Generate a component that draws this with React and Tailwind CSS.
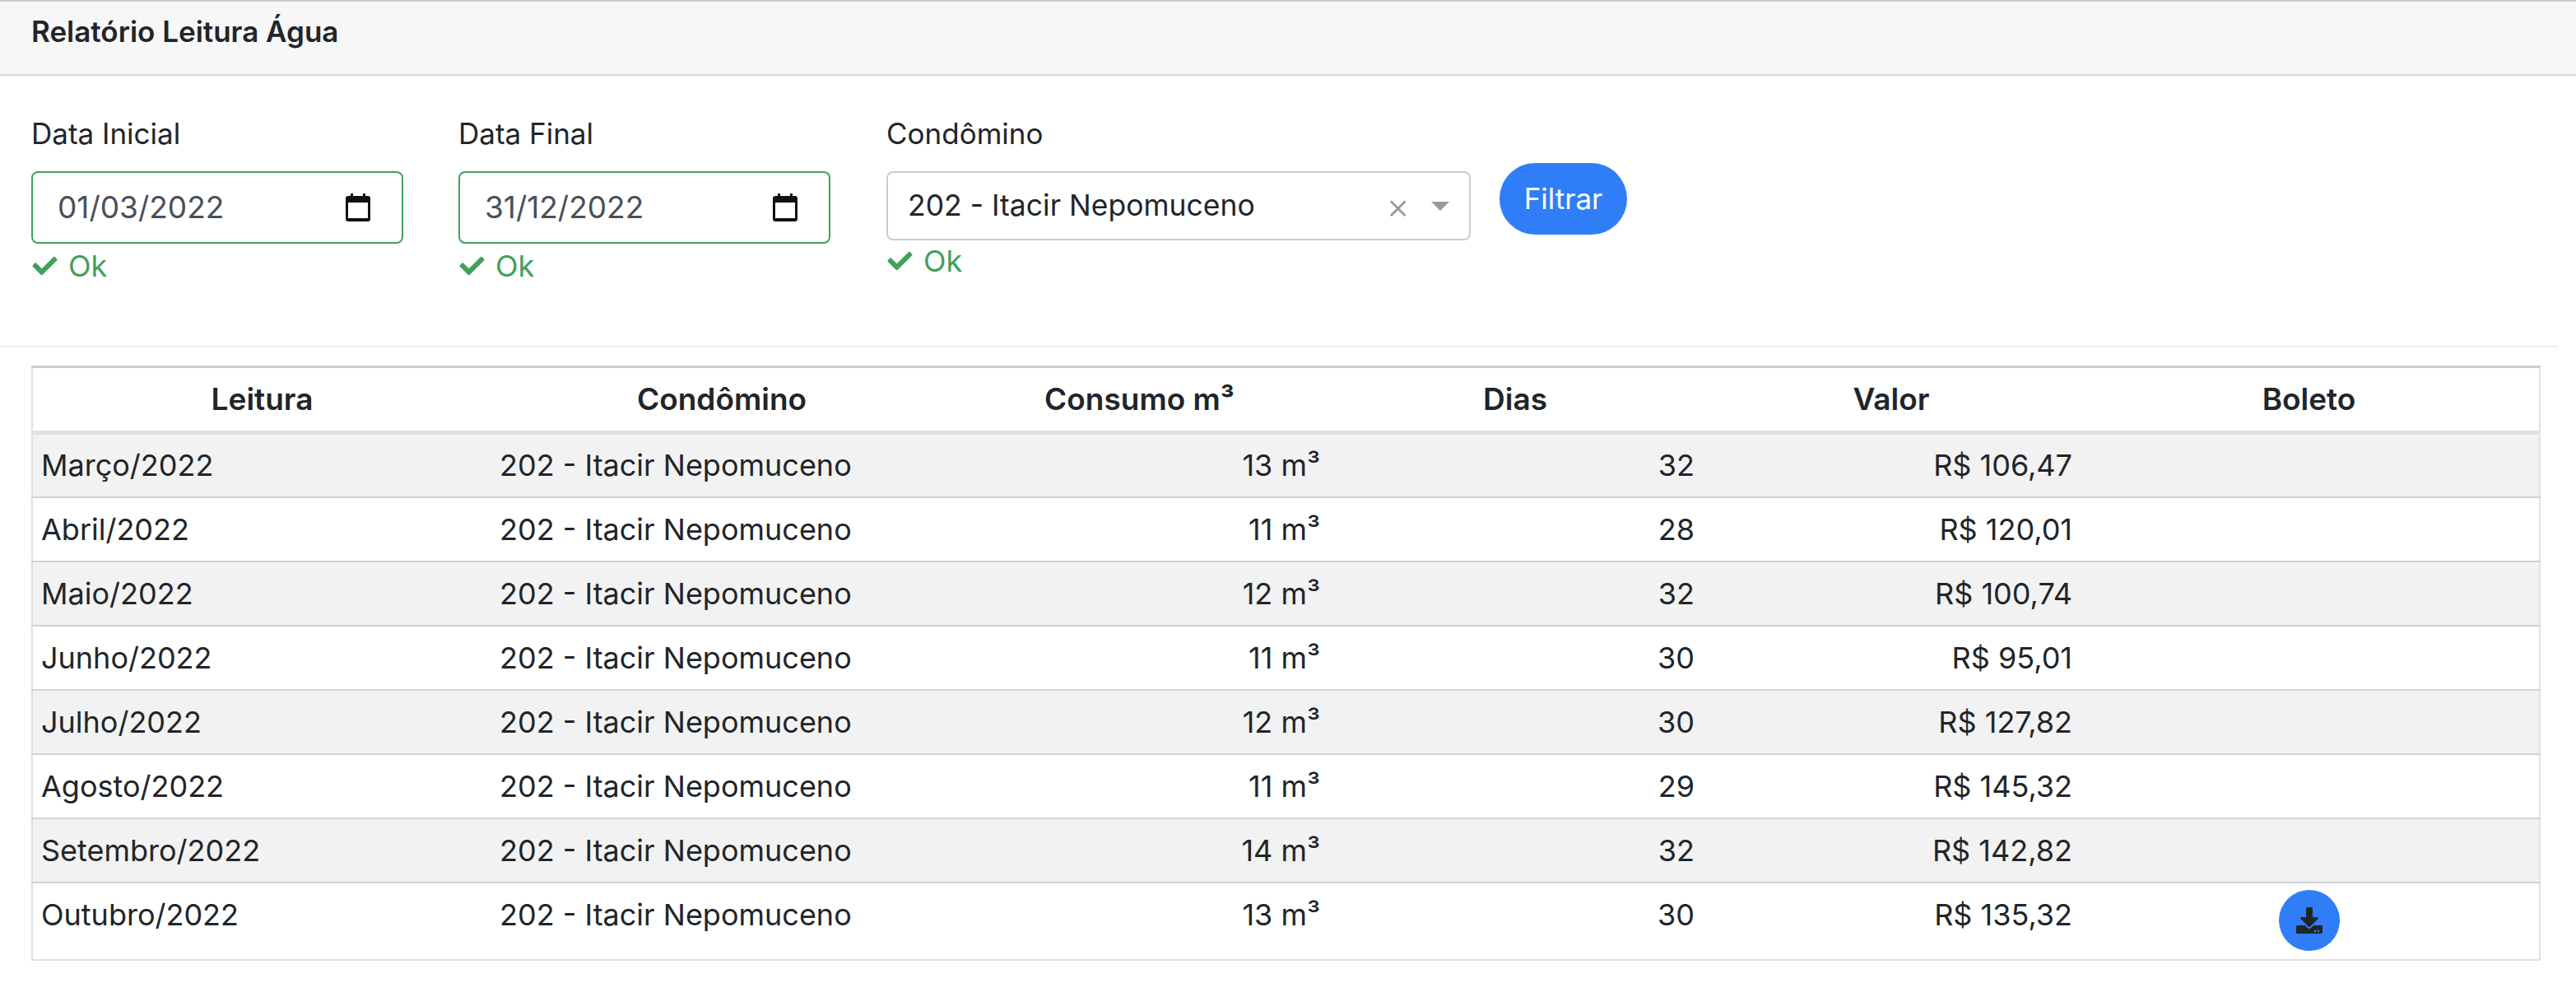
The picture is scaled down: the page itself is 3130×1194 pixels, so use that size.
import React from "react";
import { FaCheck, FaDownload } from "react-icons/fa";

const rows = [
  ["Março/2022", "13 m³", "32", "R$ 106,47"],
  ["Abril/2022", "11 m³", "28", "R$ 120,01"],
  ["Maio/2022", "12 m³", "32", "R$ 100,74"],
  ["Junho/2022", "11 m³", "30", "R$ 95,01"],
  ["Julho/2022", "12 m³", "30", "R$ 127,82"],
  ["Agosto/2022", "11 m³", "29", "R$ 145,32"],
  ["Setembro/2022", "14 m³", "32", "R$ 142,82"],
  ["Outubro/2022", "13 m³", "30", "R$ 135,32"],
];

function Cal() {
  return (
    <svg width="30" height="34" viewBox="0 0 30 34" className="block">
      <path d="M6 0h3v3h12V0h3v3h3a3 3 0 0 1 3 3v25a3 3 0 0 1-3 3H3a3 3 0 0 1-3-3V6a3 3 0 0 1 3-3h3z" fill="#111" />
      <rect x="3" y="11" width="24" height="19" fill="#fff" />
    </svg>
  );
}

function Ok({ className = "" }) {
  return (
    <div className={`flex items-center gap-[12px] text-[#41a05c] text-[36px] leading-[34px] ${className}`}>
      <FaCheck className="w-[33px] h-[30px]" />
      <span>Ok</span>
    </div>
  );
}

function DateField({ label, value }) {
  return (
    <div className="w-[452px] flex flex-col">
      <label className="text-[35px] leading-[40px] text-[#212529] h-[60px] -mt-[6px] mb-[6px]">{label}</label>
      <div className="h-[88px] border-2 border-[#41a05c] rounded-[8px] flex items-center justify-between pl-[30px] pr-[38px] text-[37px] text-[#495057]">
        <span>{value}</span>
        <Cal />
      </div>
      <Ok className="mt-[10px]" />
    </div>
  );
}

export default function App() {
  return (
    <div className="w-[3130px] h-[1194px] bg-white overflow-hidden text-[#212529]" style={{ fontFamily: "Inter, 'Liberation Sans', sans-serif" }}>
      <div className="h-[92px] bg-[#f7f7f7] border-t-2 border-b-2 border-t-[#c8ccd0] border-b-[#d8d8d8] px-[38px] pt-[14px] text-[35px] leading-[44px] font-semibold">
        Relatório Leitura Água
      </div>
      <div className="w-[3108px] h-[330px] border-b-2 border-[#eeeeee] pl-[38px] pt-[56px] flex items-start">
        <DateField label="Data Inicial" value="01/03/2022" />
        <div className="w-[67px]" />
        <DateField label="Data Final" value="31/12/2022" />
        <div className="w-[68px]" />
        <div className="w-[710px] flex flex-col">
          <label className="text-[35px] leading-[40px] h-[60px] -mt-[6px] mb-[6px]">Condômino</label>
          <div className="h-[84px] border-2 border-[#cccccc] rounded-[8px] flex items-center pl-[24px] pr-[24px] text-[35.5px]">
            <span className="flex-1">202 - Itacir Nepomuceno</span>
            <span className="text-[#999999] text-[44px] leading-none font-light mr-[26px]">×</span>
            <span className="w-0 h-0 border-l-[11px] border-r-[11px] border-t-[11px] border-l-transparent border-r-transparent border-t-[#999999]" />
          </div>
          <Ok className="mt-[8px]" />
        </div>
        <button className="ml-[35px] mt-[50px] w-[155px] h-[87px] rounded-[44px] bg-[#2f7ef7] text-white text-[35px]">Filtrar</button>
      </div>
      <div className="pl-[38px] pt-[22px]">
        <table className="w-[3047px] table-fixed border-collapse text-[36px]">
          <colgroup>
            <col className="w-[558px]" />
            <col className="w-[560px]" />
            <col className="w-[455px]" />
            <col className="w-[458px]" />
            <col className="w-[456px]" />
            <col className="w-[560px]" />
          </colgroup>
          <thead>
            <tr className="h-[80px] border-t-[3px] border-t-[#c8ccd0] border-b-[5px] border-b-[#dee2e6] border-x-2 border-x-[#dee2e6]">
              {["Leitura", "Condômino", "Consumo m³", "Dias", "Valor", "Boleto"].map((h) => (
                <th key={h} className="font-semibold text-center p-0 text-[37px]">{h}</th>
              ))}
            </tr>
          </thead>
          <tbody>
            {rows.map((r, i) => (
              <tr
                key={r[0]}
                className={`${i === 7 ? "h-[94px] border-b-[#dee2e6] align-top" : "h-[78px] border-b-[#ced2d6]"} border-b-2 border-x-2 border-x-[#dee2e6] ${i % 2 === 0 ? "bg-[#f2f2f2]" : "bg-white"}`}
              >
                <td className={`pl-[10px] ${i === 7 ? "pt-[11px]" : ""}`}>{r[0]}</td>
                <td className={`pl-[10px] ${i === 7 ? "pt-[11px]" : ""}`}>202 - Itacir Nepomuceno</td>
                <td className={`pr-[8px] text-right ${i === 7 ? "pt-[11px]" : ""}`}>{r[1]}</td>
                <td className={`pr-[11px] text-right ${i === 7 ? "pt-[11px]" : ""}`}>{r[2]}</td>
                <td className={`pr-[8px] text-right ${i === 7 ? "pt-[11px]" : ""}`}>{r[3]}</td>
                <td className="text-center align-top p-0">
                  {i === 7 && (
                    <button className="mt-[8px] w-[74px] h-[74px] rounded-full bg-[#2f7ef7] inline-flex items-center justify-center">
                      <FaDownload className="w-[32px] h-[32px] text-[#212529]" />
                    </button>
                  )}
                </td>
              </tr>
            ))}
          </tbody>
        </table>
      </div>
    </div>
  );
}
